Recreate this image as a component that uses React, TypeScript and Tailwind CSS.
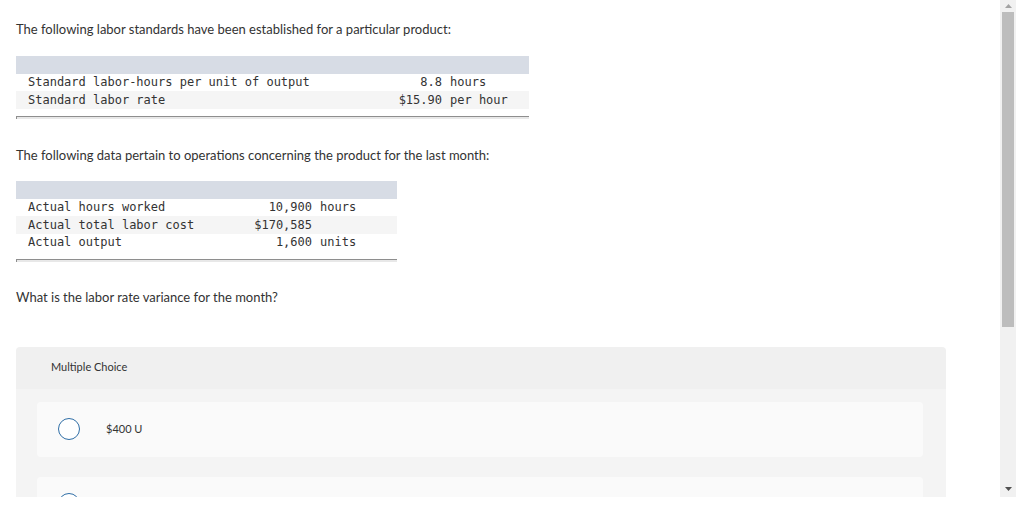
import React from 'react';

type Row = { label: string; value: string; unit?: string; shaded?: boolean };

const standards: Row[] = [
  { label: 'Standard labor-hours per unit of output', value: '8.8', unit: 'hours' },
  { label: 'Standard labor rate', value: '$15.90', unit: 'per hour', shaded: true },
];

const actuals: Row[] = [
  { label: 'Actual hours worked', value: '10,900', unit: 'hours' },
  { label: 'Actual total labor cost', value: '$170,585', shaded: true },
  { label: 'Actual output', value: '1,600', unit: 'units' },
];

const mono = { fontFamily: '"DejaVu Sans Mono", "Liberation Mono", monospace' };

const DataTable: React.FC<{ rows: Row[]; width: string; labelW: string; valueW: string }> = ({
  rows,
  width,
  labelW,
  valueW,
}) => (
  <div className={width}>
    <div className="h-[17.5px] bg-[#d7dce5]" />
    {rows.map((row, i) => (
      <div
        key={i}
        className={`flex items-center h-[17.5px] text-[12px] text-[#333] ${row.shaded ? 'bg-[#f5f5f5]' : 'bg-white'}`}
        style={mono}
      >
        <span className={`${labelW} pl-3 whitespace-pre`}>{row.label}</span>
        <span className={`${valueW} text-right whitespace-pre`}>{row.value}</span>
        <span className="pl-[8px] whitespace-pre">{row.unit ?? ''}</span>
      </div>
    ))}
    <div className="mt-[7.5px] h-[3px] border-t border-l border-[#8e8e8e] bg-[#e8e8e8]" />
  </div>
);

const Option: React.FC<{ text: string }> = ({ text }) => (
  <div className="flex items-center h-[55px] pl-[21px] bg-[#fafafa] rounded-sm">
    <span className="w-[22px] h-[22px] rounded-full border-[1.5px] border-[#2f6ea6] bg-white" />
    <span className="ml-[26px] text-[11px] text-[#333]">{text}</span>
  </div>
);

export default function App() {
  return (
    <div
      className="w-[1024px] h-[513px] bg-white overflow-hidden"
      style={{ fontFamily: 'Lato, "Open Sans", "Liberation Sans", sans-serif' }}
    >
      <div className="flex h-[497px]">
        <div className="w-[1000px] h-full overflow-hidden px-4 pt-[20px]">
          <p className="text-[13px] leading-[18px] text-[#333]">
            The following labor standards have been established for a particular product:
          </p>
          <div className="mt-[18px]">
            <DataTable rows={standards} width="w-[513px]" labelW="w-[300px]" valueW="w-[126px]" />
          </div>
          <p className="mt-[27px] text-[13px] leading-[18px] text-[#333]">
            The following data pertain to operations concerning the product for the last month:
          </p>
          <div className="mt-[17px]">
            <DataTable rows={actuals} width="w-[381px]" labelW="w-[200px]" valueW="w-[96px]" />
          </div>
          <p className="mt-[26px] text-[13px] leading-[18px] text-[#333]">
            What is the labor rate variance for the month?
          </p>
          <div className="mt-[41px] w-[930px] rounded-t-sm overflow-hidden">
            <div className="h-[42px] flex items-center pl-[35px] bg-[#f0f0f0] text-[11px] text-[#333]">
              Multiple Choice
            </div>
            <div className="bg-[#f4f4f4] pl-[21px] pr-[23px] pt-[13px] pb-5 flex flex-col gap-5">
              <Option text="$400 U" />
              <Option text="$1,090 F" />
            </div>
          </div>
        </div>
        {/* scrollbar */}
        <div className="w-[16px] h-full bg-[#f1f1f1] flex flex-col items-center">
          <div className="h-[12px] flex items-center justify-center">
            <svg width="7" height="4" viewBox="0 0 7 4">
              <path d="M3.5 0 L7 4 L0 4 Z" fill="#a3a3a3" />
            </svg>
          </div>
          <div className="w-[12px] h-[315px] bg-[#bdbdbd]" />
          <div className="flex-1" />
          <div className="h-[14px] flex items-start justify-center pt-[4px]">
            <svg width="7" height="4" viewBox="0 0 7 4">
              <path d="M0 0 L7 0 L3.5 4 Z" fill="#505050" />
            </svg>
          </div>
        </div>
      </div>
    </div>
  );
}
